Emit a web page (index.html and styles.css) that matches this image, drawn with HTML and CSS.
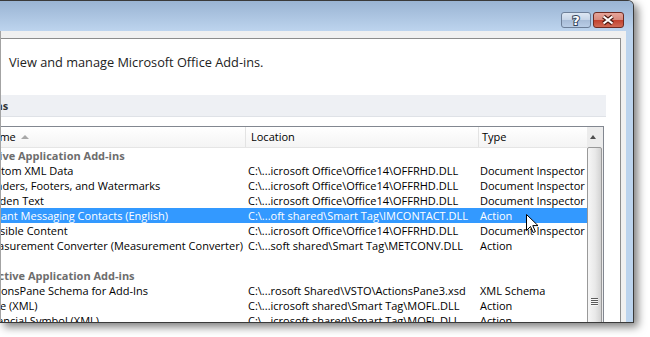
FILE: index.html
```html
<!DOCTYPE html>
<html lang="en">
<head>
  <meta charset="UTF-8">
  <title>Word Options - Add-ins</title>
  <link rel="stylesheet" href="styles.css">
</head>
<body>
  <div class="window">
    <div class="titlebar">
      <span class="cap help">
        <svg width="30" height="16" viewBox="0 0 30 16"><text x="15" y="13" text-anchor="middle" font-family="DejaVu Sans" font-weight="bold" font-size="13" fill="#fff" stroke="#34465e" stroke-width="2" paint-order="stroke">?</text></svg>
      </span>
      <span class="cap close">
        <svg width="31" height="16" viewBox="0 0 31 16"><path d="M10.5 4.5 L19.5 11.5 M19.5 4.5 L10.5 11.5" stroke="#4b1a12" stroke-width="4.5" fill="none"/><path d="M10.5 4.5 L19.5 11.5 M19.5 4.5 L10.5 11.5" stroke="#fff" stroke-width="2.2" fill="none"/></svg>
      </span>
    </div>
    <div class="client">
      <div class="panel">
        <div class="inner">
          <p class="desc">View and manage Microsoft Office Add-ins.</p>
          <div class="band">Add-ins</div>
          <div class="listbox">
            <div class="list">
              <div class="row thead">
                <span class="name">Name<i class="sort"></i></span>
                <span class="loc">Location</span>
                <span class="type">Type</span>
              </div>
              <div class="row group"><span class="name">Active Application Add-ins</span></div>
              <div class="row"><span class="name">Custom XML Data</span><span class="loc">C:\...icrosoft Office\Office14\OFFRHD.DLL</span><span class="type">Document Inspector</span></div>
              <div class="row"><span class="name">Headers, Footers, and Watermarks</span><span class="loc">C:\...icrosoft Office\Office14\OFFRHD.DLL</span><span class="type">Document Inspector</span></div>
              <div class="row"><span class="name">Hidden Text</span><span class="loc">C:\...icrosoft Office\Office14\OFFRHD.DLL</span><span class="type">Document Inspector</span></div>
              <div class="row sel"><span class="name">Instant Messaging Contacts (English)</span><span class="loc">C:\...oft shared\Smart Tag\IMCONTACT.DLL</span><span class="type">Action</span></div>
              <div class="row"><span class="name">Invisible Content</span><span class="loc">C:\...icrosoft Office\Office14\OFFRHD.DLL</span><span class="type">Document Inspector</span></div>
              <div class="row"><span class="name">Measurement Converter (Measurement Converter)</span><span class="loc">C:\...soft shared\Smart Tag\METCONV.DLL</span><span class="type">Action</span></div>
              <div class="row"></div>
              <div class="row group"><span class="name">Inactive Application Add-ins</span></div>
              <div class="row"><span class="name">ActionsPane Schema for Add-Ins</span><span class="loc">C:\...rosoft Shared\VSTO\ActionsPane3.xsd</span><span class="type">XML Schema</span></div>
              <div class="row"><span class="name">Date (XML)</span><span class="loc">C:\...icrosoft shared\Smart Tag\MOFL.DLL</span><span class="type">Action</span></div>
              <div class="row"><span class="name">Financial Symbol (XML)</span><span class="loc">C:\...icrosoft shared\Smart Tag\MOFL.DLL</span><span class="type">Action</span></div>
            </div>
            <div class="vscroll">
              <div class="arrow-up"><i></i></div>
              <div class="thumb"><i class="grip"></i></div>
            </div>
          </div>
        </div>
      </div>
    </div>
  </div>

  <svg class="cursor" width="13" height="20" viewBox="0 0 13 20">
    <path d="M0.5 0.5 L0.5 16.5 L4.5 12.5 L7.2 18.6 L9.4 17.6 L6.8 11.6 L12 11.6 Z" fill="#fff" stroke="#000" stroke-width="1" stroke-linejoin="miter"/>
  </svg>
</body>
</html>
```

FILE: styles.css
```css
* {
  box-sizing: border-box;
}

body {
  margin: 0;
  width: 650px;
  height: 337px;
  overflow: hidden;
  background: #fff;
  font-family: "Open Sans", "Noto Sans", sans-serif;
  color: #000;
  position: relative;
}

.window {
  width: 634px;
  height: 323px;
  display: flex;
  flex-direction: column;
  background: #bcd4ee;
  border: 1px solid #3a3a3a;
  border-left: none;
  border-top-right-radius: 6px;
  box-shadow: 4px 4px 8px rgba(0, 0, 0, 0.5);
  overflow: hidden;
}

.titlebar {
  height: 30px;
  flex: none;
  display: flex;
  justify-content: flex-end;
  align-items: flex-start;
  gap: 2px;
  padding: 11px 9px 0 0;
  background: linear-gradient(#9ab4d3, #bdd4ee);
}

.cap {
  display: block;
  height: 16px;
  border-radius: 3px;
}

.cap svg {
  display: block;
}

.help {
  width: 30px;
  border: 1px solid #6d7f98;
  background: linear-gradient(#dde7f3, #c5d4e7 50%, #a7bcd7 51%, #b9cde6);
}

.help svg,
.close svg {
  margin: -1px;
}

.close {
  width: 31px;
  border: 1px solid #6e2a21;
  background: linear-gradient(#e6a59a, #d7897c 50%, #c2402d 51%, #d06a55);
}

.client {
  flex: 1;
  display: flex;
  min-height: 0;
  margin-right: 7px;
  padding: 7px 5px 0 0;
  background: #f0f0f0;
  border-left: 1px solid #a3a3a3;
}

.panel {
  flex: 1;
  min-width: 0;
  background: #fff;
  border-top: 1px solid #8c8c8c;
  border-right: 1px solid #8c8c8c;
  overflow: hidden;
}

.inner {
  margin-left: -60px;
}

.desc {
  margin: 14px 0 0;
  padding-left: 68px;
  font-size: 12.75px;
  line-height: 18px;
  color: #222;
  white-space: nowrap;
}

.band {
  margin: 24px 14px 0 0;
  height: 22px;
  padding-left: 26px;
  background: #eef0f4;
  border-bottom: 1px solid #dfe2e7;
  font-size: 11px;
  font-weight: 700;
  line-height: 21px;
  color: #333;
}

.listbox {
  margin: 9px 16px 0 0;
  height: 300px;
  display: flex;
  border: 1px solid #828790;
}

.list {
  flex: 1;
  min-width: 0;
  font-size: 11px;
}

.row {
  display: grid;
  grid-template-columns: 303px 233px 1fr;
  height: 15px;
  line-height: 15px;
  white-space: nowrap;
}

.row span {
  overflow: hidden;
}

.row .name {
  padding-left: 40px;
}

.row .loc {
  padding-left: 3px;
}

.row .type {
  padding-left: 2px;
}

.thead {
  height: 21px;
  line-height: 20px;
  background: linear-gradient(#ffffff, #f4f4f4);
  border-bottom: 1px solid #e5e5e5;
}

.thead .name {
  padding-left: 43px;
}

.thead .loc {
  padding-left: 5px;
  border-left: 1px solid #e3e3e3;
}

.thead .type {
  padding-left: 3px;
  border-left: 1px solid #e3e3e3;
}

.sort {
  display: inline-block;
  margin-left: 5px;
  vertical-align: 2px;
  border-left: 4px solid transparent;
  border-right: 4px solid transparent;
  border-bottom: 4px solid #a8a8a8;
}

.group .name {
  padding-left: 39px;
  font-weight: 700;
  color: #6d6d6d;
}

.sel {
  background: #3399ff;
  color: #fff;
}

.vscroll {
  width: 16px;
  flex: none;
  display: flex;
  flex-direction: column;
  background: #ececec;
}

.arrow-up {
  height: 20px;
  flex: none;
  padding: 8px 0 0 3px;
}

.arrow-up i {
  display: block;
  width: 0;
  border-left: 3.5px solid transparent;
  border-right: 3.5px solid transparent;
  border-bottom: 4px solid #4e4e4e;
}

.thumb {
  width: 15px;
  height: 400px;
  flex: none;
  border: 1px solid #999;
  border-radius: 2px;
  background: linear-gradient(90deg, #f6f6f6, #e9e9e9 55%, #d2d2d2);
}

.grip {
  display: block;
  width: 7px;
  height: 8px;
  margin: 150px 0 0 3px;
  background: repeating-linear-gradient(#5c5c5c 0 1px, #f8f8f8 1px 2px);
}

.cursor {
  position: absolute;
  left: 526px;
  top: 214px;
}
```
